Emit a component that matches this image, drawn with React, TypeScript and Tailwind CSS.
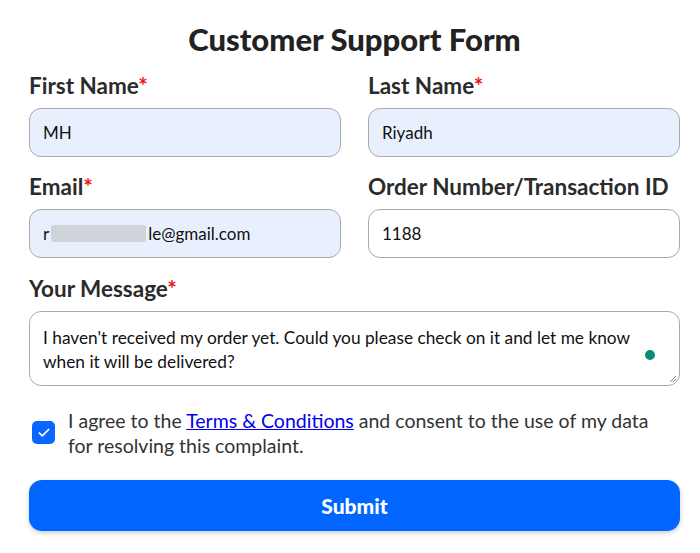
import { Check } from "lucide-react";

const font = { fontFamily: "Lato, 'Noto Sans', sans-serif" };

function Label({ text, required }: { text: string; required?: boolean }) {
  return (
    <label className="block text-[22.5px] font-bold text-[#2b2b2b] leading-[26px] mb-[9px]">
      {text}
      {required && <span className="text-[#ee1111]">*</span>}
    </label>
  );
}

function Field({
  label,
  value,
  required,
  filled,
}: {
  label: string;
  value: string;
  required?: boolean;
  filled?: boolean;
}) {
  return (
    <div className="flex flex-col">
      <Label text={label} required={required} />
      <div
        className={`h-[49px] rounded-[12px] border border-[#a8a8ad] px-[13px] flex items-center text-[17px] text-[#111] ${
          filled ? "bg-[#e8f0fe]" : "bg-white"
        }`}
      >
        {value}
      </div>
    </div>
  );
}

export default function App() {
  return (
    <div className="w-[700px] h-[553px] bg-white pl-[29px] pr-[20px] pt-[20px]" style={font}>
      <h1 className="text-center text-[31px] font-black text-[#222] leading-[38px] mb-[15px]">
        Customer Support Form
      </h1>
      <div className="grid grid-cols-2 gap-x-[27px] gap-y-[17px]">
        <Field label="First Name" value="MH" required filled />
        <Field label="Last Name" value="Riyadh" required filled />
        <div className="flex flex-col">
          <Label text="Email" required />
          <div className="h-[49px] rounded-[12px] border border-[#a8a8ad] bg-[#e8f0fe] px-[13px] flex items-center text-[17px] text-[#111]">
            <span>r</span>
            <span className="inline-block w-[95px] h-[17px] bg-[#cfd3da] mx-[2px] rounded-[2px]" />
            <span>le@gmail.com</span>
          </div>
        </div>
        <Field label="Order Number/Transaction ID" value="1188" />
      </div>
      <div className="mt-[18px]">
        <Label text="Your Message" required />
        <div className="relative h-[75px] rounded-[12px] border border-[#a8a8ad] bg-white pl-[13px] pr-[40px] pt-[14px] text-[17.3px] leading-[24px] text-[#111]">
          I haven't received my order yet. Could you please check on it and let me know when it will be delivered?
          <span className="absolute right-[24px] top-[38px] w-[10px] h-[10px] rounded-full bg-[#0c8a78]" />
          <svg className="absolute right-[2px] bottom-[2px]" width="9" height="9" viewBox="0 0 9 9">
            <path d="M8 2 L2 8 M8 5 L5 8" stroke="#888" strokeWidth="1" />
          </svg>
        </div>
      </div>
      <div className="flex items-start mt-[22px] pl-[3px]">
        <div className="mt-[13px] w-[23px] h-[23px] rounded-[5px] bg-[#0b66ff] flex items-center justify-center shrink-0">
          <Check className="w-[14px] h-[14px] text-white" strokeWidth={3} />
        </div>
        <p className="ml-[13px] max-w-[600px] text-[19.5px] leading-[25px] text-[#333]">
          I agree to the{" "}
          <a href="#" className="text-[#0000ee] underline">
            Terms &amp; Conditions
          </a>{" "}
          and consent to the use of my data for resolving this complaint.
        </p>
      </div>
      <button className="mt-[22px] w-full h-[51px] rounded-[13px] bg-[#0066ff] text-white text-[21px] font-black shadow-[0_2px_5px_rgba(0,0,0,0.2)]">
        Submit
      </button>
    </div>
  );
}
